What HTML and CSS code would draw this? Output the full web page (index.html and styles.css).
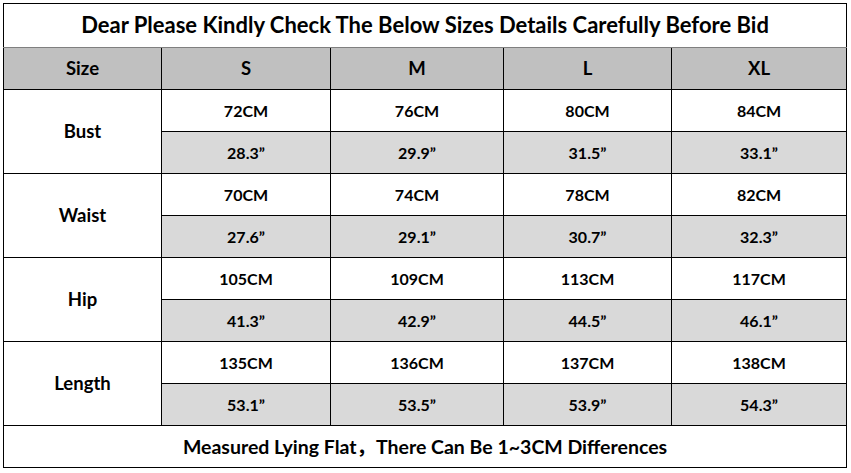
FILE: index.html
```html
<!DOCTYPE html>
<html>
<head>
<meta charset="utf-8">
<link rel="stylesheet" href="styles.css">
</head>
<body>
<table class="sizes">
  <colgroup>
    <col class="c-label"><col class="c-s"><col class="c-m"><col class="c-l"><col class="c-xl">
  </colgroup>
  <tr class="title-row"><td colspan="5" class="title">Dear Please Kindly Check The Below Sizes Details Carefully Before Bid</td></tr>
  <tr class="head"><td>Size</td><td>S</td><td>M</td><td>L</td><td>XL</td></tr>
  <tr><td rowspan="2" class="label">Bust</td><td>72CM</td><td>76CM</td><td>80CM</td><td>84CM</td></tr>
  <tr class="inch"><td>28.3”</td><td>29.9”</td><td>31.5”</td><td>33.1”</td></tr>
  <tr><td rowspan="2" class="label">Waist</td><td>70CM</td><td>74CM</td><td>78CM</td><td>82CM</td></tr>
  <tr class="inch"><td>27.6”</td><td>29.1”</td><td>30.7”</td><td>32.3”</td></tr>
  <tr><td rowspan="2" class="label">Hip</td><td>105CM</td><td>109CM</td><td>113CM</td><td>117CM</td></tr>
  <tr class="inch"><td>41.3”</td><td>42.9”</td><td>44.5”</td><td>46.1”</td></tr>
  <tr><td rowspan="2" class="label">Length</td><td>135CM</td><td>136CM</td><td>137CM</td><td>138CM</td></tr>
  <tr class="inch"><td>53.1”</td><td>53.5”</td><td>53.9”</td><td>54.3”</td></tr>
  <tr class="foot-row"><td colspan="5" class="foot">Measured Lying Flat，There Can Be 1~3CM Differences</td></tr>
</table>
</body>
</html>
```
FILE: styles.css
```css
html, body {
  margin: 0;
  padding: 0;
  background: #ffffff;
}
body {
  padding: 3px 0 0 3px;
}
.sizes {
  border-collapse: collapse;
  width: 843px;
  table-layout: fixed;
  font-family: Lato, "Noto Sans", "Noto Sans CJK SC", sans-serif;
  font-weight: 700;
  color: #000;
  border: 1.5px solid #000;
}
.c-label { width: 158px; }
.c-s { width: 169px; }
.c-m { width: 173px; }
.c-l { width: 168px; }
.c-xl { width: 175px; }
.sizes td {
  border: 1px solid #000;
  height: 41px;
  padding: 0;
  text-align: center;
  vertical-align: middle;
  font-size: 16px;
  line-height: 1;
}
.sizes .title {
  font-size: 22px;
  border-bottom: 1px solid #7f7f7f;
  padding-bottom: 2px;
}
.head td {
  background: #c0c0c0;
  font-size: 18.5px;
}
.inch td {
  background: #d9d9d9;
}
.sizes .label {
  background: #fff;
  font-size: 18.5px;
}
.sizes .foot {
  font-size: 19.5px;
}
```
